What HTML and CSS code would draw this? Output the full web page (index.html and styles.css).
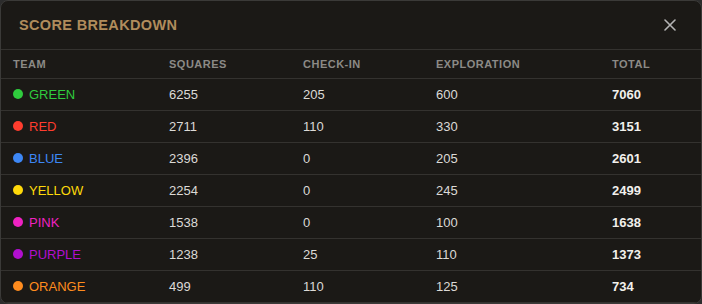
FILE: index.html
```html
<!DOCTYPE html>
<html>
<head>
<meta charset="utf-8">
<link rel="stylesheet" href="styles.css">
</head>
<body>
<div class="modal">
  <div class="modal-header">
    <h2 class="title">SCORE BREAKDOWN</h2>
    <button class="close" aria-label="Close">
      <svg width="12" height="12" viewBox="0 0 12 12"><path d="M1 1L11 11M11 1L1 11" stroke="#b4b4b4" stroke-width="1.6" stroke-linecap="round"/></svg>
    </button>
  </div>
  <table class="scores">
    <colgroup>
      <col class="c-team"><col class="c-sq"><col class="c-ci"><col class="c-ex"><col class="c-tot">
    </colgroup>
    <thead>
      <tr><th>TEAM</th><th>SQUARES</th><th>CHECK-IN</th><th>EXPLORATION</th><th>TOTAL</th></tr>
    </thead>
    <tbody>
      <tr><td><span class="team green"><i class="dot"></i>GREEN</span></td><td>6255</td><td>205</td><td>600</td><td class="total">7060</td></tr>
      <tr><td><span class="team red"><i class="dot"></i>RED</span></td><td>2711</td><td>110</td><td>330</td><td class="total">3151</td></tr>
      <tr><td><span class="team blue"><i class="dot"></i>BLUE</span></td><td>2396</td><td>0</td><td>205</td><td class="total">2601</td></tr>
      <tr><td><span class="team yellow"><i class="dot"></i>YELLOW</span></td><td>2254</td><td>0</td><td>245</td><td class="total">2499</td></tr>
      <tr><td><span class="team pink"><i class="dot"></i>PINK</span></td><td>1538</td><td>0</td><td>100</td><td class="total">1638</td></tr>
      <tr><td><span class="team purple"><i class="dot"></i>PURPLE</span></td><td>1238</td><td>25</td><td>110</td><td class="total">1373</td></tr>
      <tr><td><span class="team orange"><i class="dot"></i>ORANGE</span></td><td>499</td><td>110</td><td>125</td><td class="total">734</td></tr>
    </tbody>
  </table>
</div>
</body>
</html>
```
FILE: styles.css
```css
html, body {
  margin: 0;
  padding: 0;
  background: #2c2c2c;
  font-family: "Liberation Sans", Arial, sans-serif;
}
.modal {
  width: 702px;
  height: 304px;
  box-sizing: border-box;
  background: #1b1916;
  border: 1px solid #3b3a38;
  border-radius: 8px;
  overflow: hidden;
}
.modal-header {
  height: 48px;
  display: flex;
  align-items: center;
  justify-content: space-between;
  padding: 0 24px 0 18px;
  border-bottom: 1px solid #34322f;
}
.title {
  margin: 0;
  font-size: 14.5px;
  font-weight: bold;
  letter-spacing: 0.35px;
  color: #b08c5c;
}
.close {
  background: none;
  border: 0;
  padding: 0;
  width: 14px;
  height: 14px;
  display: flex;
  align-items: center;
  justify-content: center;
  cursor: pointer;
}
.scores {
  width: 700px;
  border-collapse: collapse;
  table-layout: fixed;
}
.c-team { width: 156px; }
.c-sq { width: 134px; }
.c-ci { width: 133px; }
.c-ex { width: 176px; }
.c-tot { width: 101px; }
th {
  text-align: left;
  font-size: 11px;
  font-weight: bold;
  letter-spacing: 0.5px;
  color: #8c8a86;
  height: 28px;
  padding: 0 12px;
  border-bottom: 1px solid #34322f;
  box-sizing: border-box;
}
td {
  height: 30px;
  padding: 1px 12px 0;
  font-size: 13px;
  color: #dcdad6;
  border-bottom: 1px solid #34322f;
}
td.total {
  font-weight: bold;
  color: #f2f0ec;
}
.team {
  display: inline-flex;
  align-items: center;
  gap: 6px;
}
.dot {
  width: 10px;
  height: 10px;
  border-radius: 50%;
  background: currentColor;
  display: inline-block;
}
.green { color: #2fcb3d; }
.red { color: #ff3d2e; }
.blue { color: #3d87f5; }
.yellow { color: #ffd90a; }
.pink { color: #ef22c2; }
.purple { color: #b10fcf; }
.orange { color: #ff8c1e; }
```
